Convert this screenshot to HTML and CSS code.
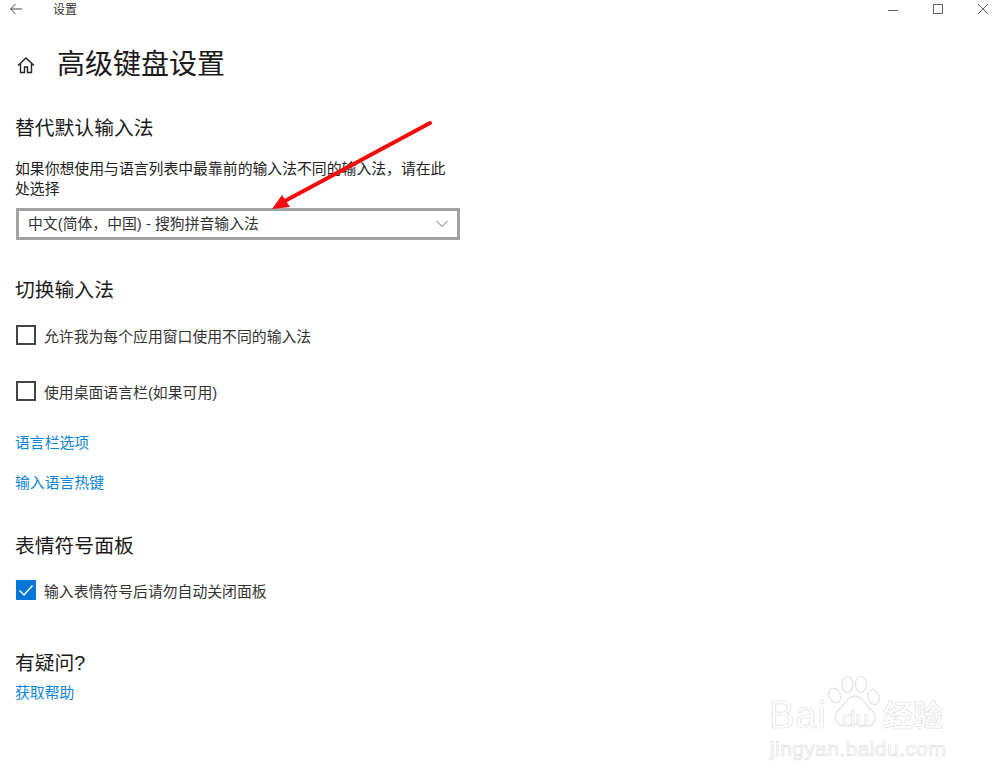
FILE: index.html
```html
<!DOCTYPE html>
<html lang="zh-CN">
  <head>
    <meta charset="UTF-8" />
    <title>设置</title>
    <link rel="stylesheet" href="styles.css">
  </head>
  <body>
    <div class="titlebar">
      <div class="titlebar-left">
        <svg class="back-icon" width="14" height="14" viewBox="0 0 14 14">
          <path d="M13 7H1.5M6.5 2 1.5 7l5 5" fill="none" stroke="#444" stroke-width="1" />
        </svg>
        <span class="app-name">设置</span>
      </div>
      <div class="window-controls">
        <svg width="12" height="12" viewBox="0 0 12 12"><path d="M1 7.5H11" stroke="#666" stroke-width="1" /></svg>
        <svg width="12" height="12" viewBox="0 0 12 12"><rect x="1.5" y="1.5" width="9" height="9" fill="none" stroke="#666" stroke-width="1" /></svg>
        <svg width="12" height="12" viewBox="0 0 12 12"><path d="M1 1 11 11M11 1 1 11" stroke="#666" stroke-width="1" /></svg>
      </div>
    </div>

    <div class="content">
      <div class="page-header">
        <svg class="home-icon" width="20" height="20" viewBox="0 0 20 20">
          <path d="M2 10.5 10 3l8 7.5M4.5 8.5V17.5H8.5V12H11.5V17.5H15.5V8.5" fill="none" stroke="#222" stroke-width="1.4" />
        </svg>
        <h1>高级键盘设置</h1>
      </div>

      <!-- 替代默认输入法 -->
      <div class="section first">
        <h2>替代默认输入法</h2>
        <p class="desc">如果你想使用与语言列表中最靠前的输入法不同的输入法，请在此处选择</p>
        <div class="select">
          <span>中文(简体，中国) - 搜狗拼音输入法</span>
          <svg width="12" height="8" viewBox="0 0 12 8"><path d="M.5 1 6 6.5 11.5 1" fill="none" stroke="#666" stroke-width="1" /></svg>
        </div>
      </div>

      <!-- 切换输入法 -->
      <div class="section switch">
        <h2>切换输入法</h2>
        <div class="check-row"><span class="checkbox"></span>允许我为每个应用窗口使用不同的输入法</div>
        <div class="check-row second"><span class="checkbox"></span>使用桌面语言栏(如果可用)</div>
        <a class="link bar-options">语言栏选项</a>
        <a class="link hotkeys">输入语言热键</a>
      </div>

      <!-- 表情符号面板 -->
      <div class="section emoji">
        <h2>表情符号面板</h2>
        <div class="check-row emoji-row">
          <span class="checkbox checked">
            <svg width="20" height="20" viewBox="0 0 20 20"><path d="M3.5 10.5 8 15l8.5-9.5" fill="none" stroke="#fff" stroke-width="1.4" /></svg>
          </span>输入表情符号后请勿自动关闭面板
        </div>
      </div>

      <div class="section help">
        <h2>有疑问?</h2>
        <a class="link help-link">获取帮助</a>
      </div>
    </div>

    <!-- red annotation arrow -->
    <svg class="arrow" width="180" height="100" viewBox="0 0 180 100">
      <path d="M159 3 12 82" stroke="#f40b0b" stroke-width="4" stroke-linecap="round" fill="none" />
      <path d="M1 89 11 75 19 87Z" fill="#f40b0b" />
    </svg>

    <!-- watermark -->
    <div class="watermark">
      <span class="wm-bai">Bai</span>
      <svg class="paw" width="56" height="58" viewBox="0 0 66 66">
        <g fill="#fff" stroke="#e4e4e4" stroke-width="1.5">
          <ellipse cx="9" cy="24" rx="6.5" ry="9" transform="rotate(-25 9 24)" />
          <ellipse cx="24" cy="11" rx="6.5" ry="9.5" />
          <ellipse cx="40" cy="11" rx="6.5" ry="9.5" />
          <ellipse cx="55" cy="26" rx="6.5" ry="9" transform="rotate(-20 55 26)" />
          <path d="M33 25C24 25 21 35 14 41 6 48 10 60 21 60 27 60 29 58 33 58 38 58 41 60 47 60 57 60 60 49 53 42 45 35 42 25 33 25Z" />
        </g>
      </svg>
      <span class="wm-du">du</span>
      <span class="wm-cn">经验</span>
      <span class="wm-url">jingyan.baidu.com</span>
    </div>
  </body>
</html>
```

FILE: styles.css
```css
* {
  box-sizing: border-box;
}

body {
  margin: 0;
  height: 783px;
  overflow: hidden;
  position: relative;
  background-color: #fff;
  color: #222;
  font-family: "Liberation Sans", "Noto Sans CJK SC", sans-serif;
  font-size: 14.85px;
}

.titlebar {
  display: flex;
  justify-content: space-between;
  align-items: center;
  height: 17px;
}

.titlebar-left {
  display: flex;
  align-items: center;
  padding-left: 9px;
}

.back-icon {
  margin-right: 30px;
}

.app-name {
  font-size: 12px;
  color: #333;
}

.window-controls {
  display: flex;
  gap: 33px;
  padding-right: 11px;
}

.content {
  padding-left: 15px;
  width: 460px;
}

.page-header {
  display: flex;
  align-items: center;
  height: 40px;
  margin-top: 28px;
  margin-left: 1px;
}

.home-icon {
  margin-right: 21px;
}

h1 {
  margin: 0;
  font-size: 28px;
  font-weight: 400;
  line-height: 40px;
  color: #1a1a1a;
}

h2 {
  margin: 0;
  font-size: 19.8px;
  font-weight: 400;
  line-height: 28px;
  color: #1a1a1a;
}

.section.first {
  margin-top: 29px;
}

.desc {
  margin: 17px 0 0;
  line-height: 20px;
  width: 440px;
}

.select {
  display: flex;
  justify-content: space-between;
  align-items: center;
  width: 444px;
  height: 32px;
  margin-top: 9px;
  margin-left: 1px;
  padding: 0 9px 4px 9px;
  border: 3px solid #a2a2a2;
  color: #333;
}

.select svg {
  margin-top: 4px;
}

.section.switch {
  margin-top: 36px;
}

.check-row {
  display: flex;
  align-items: center;
  height: 20px;
  margin-top: 21px;
  margin-left: 1px;
  color: #333;
}

.check-row.second {
  margin-top: 36px;
}

.check-row.emoji-row {
  margin-top: 20px;
}

.checkbox {
  display: block;
  flex: none;
  width: 20px;
  height: 20px;
  margin-right: 8px;
  border: 2px solid #444;
}

.checkbox.checked {
  border: 0;
  background-color: #0878d8;
}

.checkbox svg {
  display: block;
}

.link {
  display: block;
  line-height: 20px;
  color: #0a84d8;
}

.link.bar-options {
  margin-top: 32px;
}

.link.hotkeys {
  margin-top: 20px;
}

.link.help-link {
  margin-top: 6px;
}

.section.emoji {
  margin-top: 39px;
}

.section.help {
  margin-top: 49px;
}

/* overlays */
.arrow {
  position: absolute;
  left: 271px;
  top: 120px;
}

.watermark {
  position: absolute;
  left: 765px;
  top: 672px;
  width: 185px;
  height: 92px;
  color: #fff;
  -webkit-text-stroke: 0.7px #e2e2e2;
}

.paw {
  position: absolute;
  left: 62px;
  top: 2px;
}

.wm-bai {
  position: absolute;
  left: 4px;
  top: 26px;
  font-size: 38px;
  line-height: 34px;
  letter-spacing: 1px;
}

.wm-du {
  position: absolute;
  left: 77px;
  top: 35px;
  font-size: 24px;
  line-height: 24px;
}

.wm-cn {
  position: absolute;
  left: 118px;
  top: 27px;
  font-size: 30px;
  line-height: 34px;
  font-weight: 700;
}

.wm-url {
  position: absolute;
  left: 5px;
  top: 66px;
  font-size: 21px;
  line-height: 22px;
  letter-spacing: 0.4px;
}
```
